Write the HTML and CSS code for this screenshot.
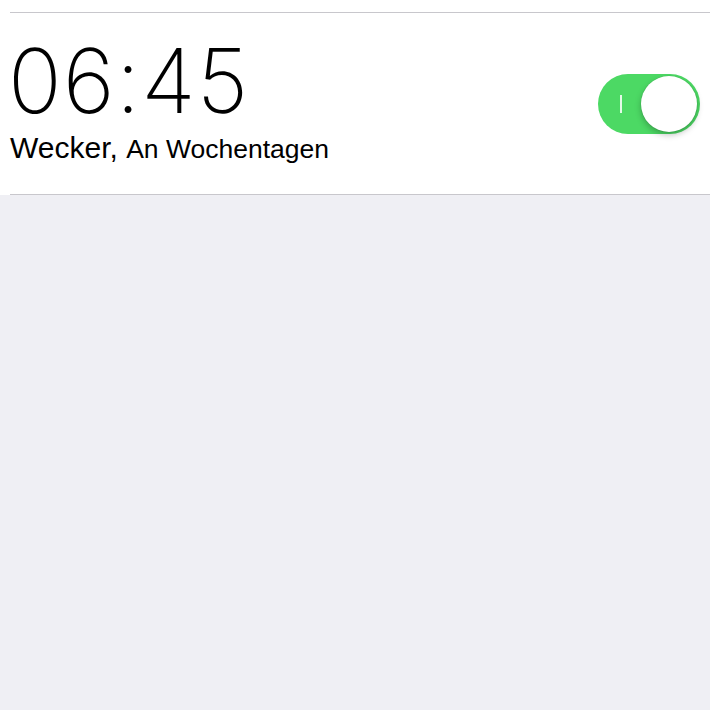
FILE: index.html
```html
<!DOCTYPE html>
<html lang="de">
  <head>
    <meta charset="UTF-8" />
    <meta name="viewport" content="width=device-width, initial-scale=1.0" />
    <title>Wecker</title>
    <link rel="stylesheet" href="styles.css">
  </head>
  <body>
    <div class="alarm-list">
      <div class="alarm-row">
        <div class="alarm-info">
          <div class="alarm-time">06:45</div>
          <div class="alarm-label">Wecker, <span class="alarm-repeat">An Wochentagen</span></div>
        </div>
        <div class="switch on">
          <span class="switch-mark"></span>
          <span class="switch-knob"></span>
        </div>
      </div>
    </div>
  </body>
</html>
```

FILE: styles.css
```css
body {
  margin: 0;
  padding: 0;
  background-color: #efeff4;
  font-family: "Liberation Sans", Arial, sans-serif;
  color: #000;
}
.alarm-list {
  background: #fff;
  padding-top: 12px;
  padding-left: 10px;
}
.alarm-row {
  display: flex;
  align-items: center;
  justify-content: space-between;
  border-top: 1px solid #c8c7cc;
  border-bottom: 1px solid #c8c7cc;
  padding-right: 10px;
  height: 181px;
}
.alarm-info {
  align-self: flex-start;
  display: flex;
  flex-direction: column;
  padding-top: 14px;
}
.alarm-time {
  font-family: Inter, "Liberation Sans", sans-serif;
  font-weight: 200;
  font-size: 89px;
  line-height: 107px;
  letter-spacing: 1px;
  margin-left: -2px;
}
.alarm-label {
  font-size: 30px;
  line-height: 36px;
  margin-top: -4px;
}
.alarm-repeat {
  font-size: 26.5px;
}
.switch {
  display: flex;
  align-items: center;
  width: 102px;
  height: 60px;
  box-sizing: border-box;
  border-radius: 30px;
  padding: 0 3px 0 22px;
  background: #4cd964;
}
.switch-mark {
  width: 2px;
  height: 18px;
  background: rgba(255, 255, 255, 0.85);
}
.switch-knob {
  margin-left: auto;
  width: 56px;
  height: 56px;
  border-radius: 50%;
  background: #fff;
  box-shadow: 0 3px 6px rgba(0, 0, 0, 0.25), 0 0 0 0.5px rgba(0, 0, 0, 0.08);
}
```
